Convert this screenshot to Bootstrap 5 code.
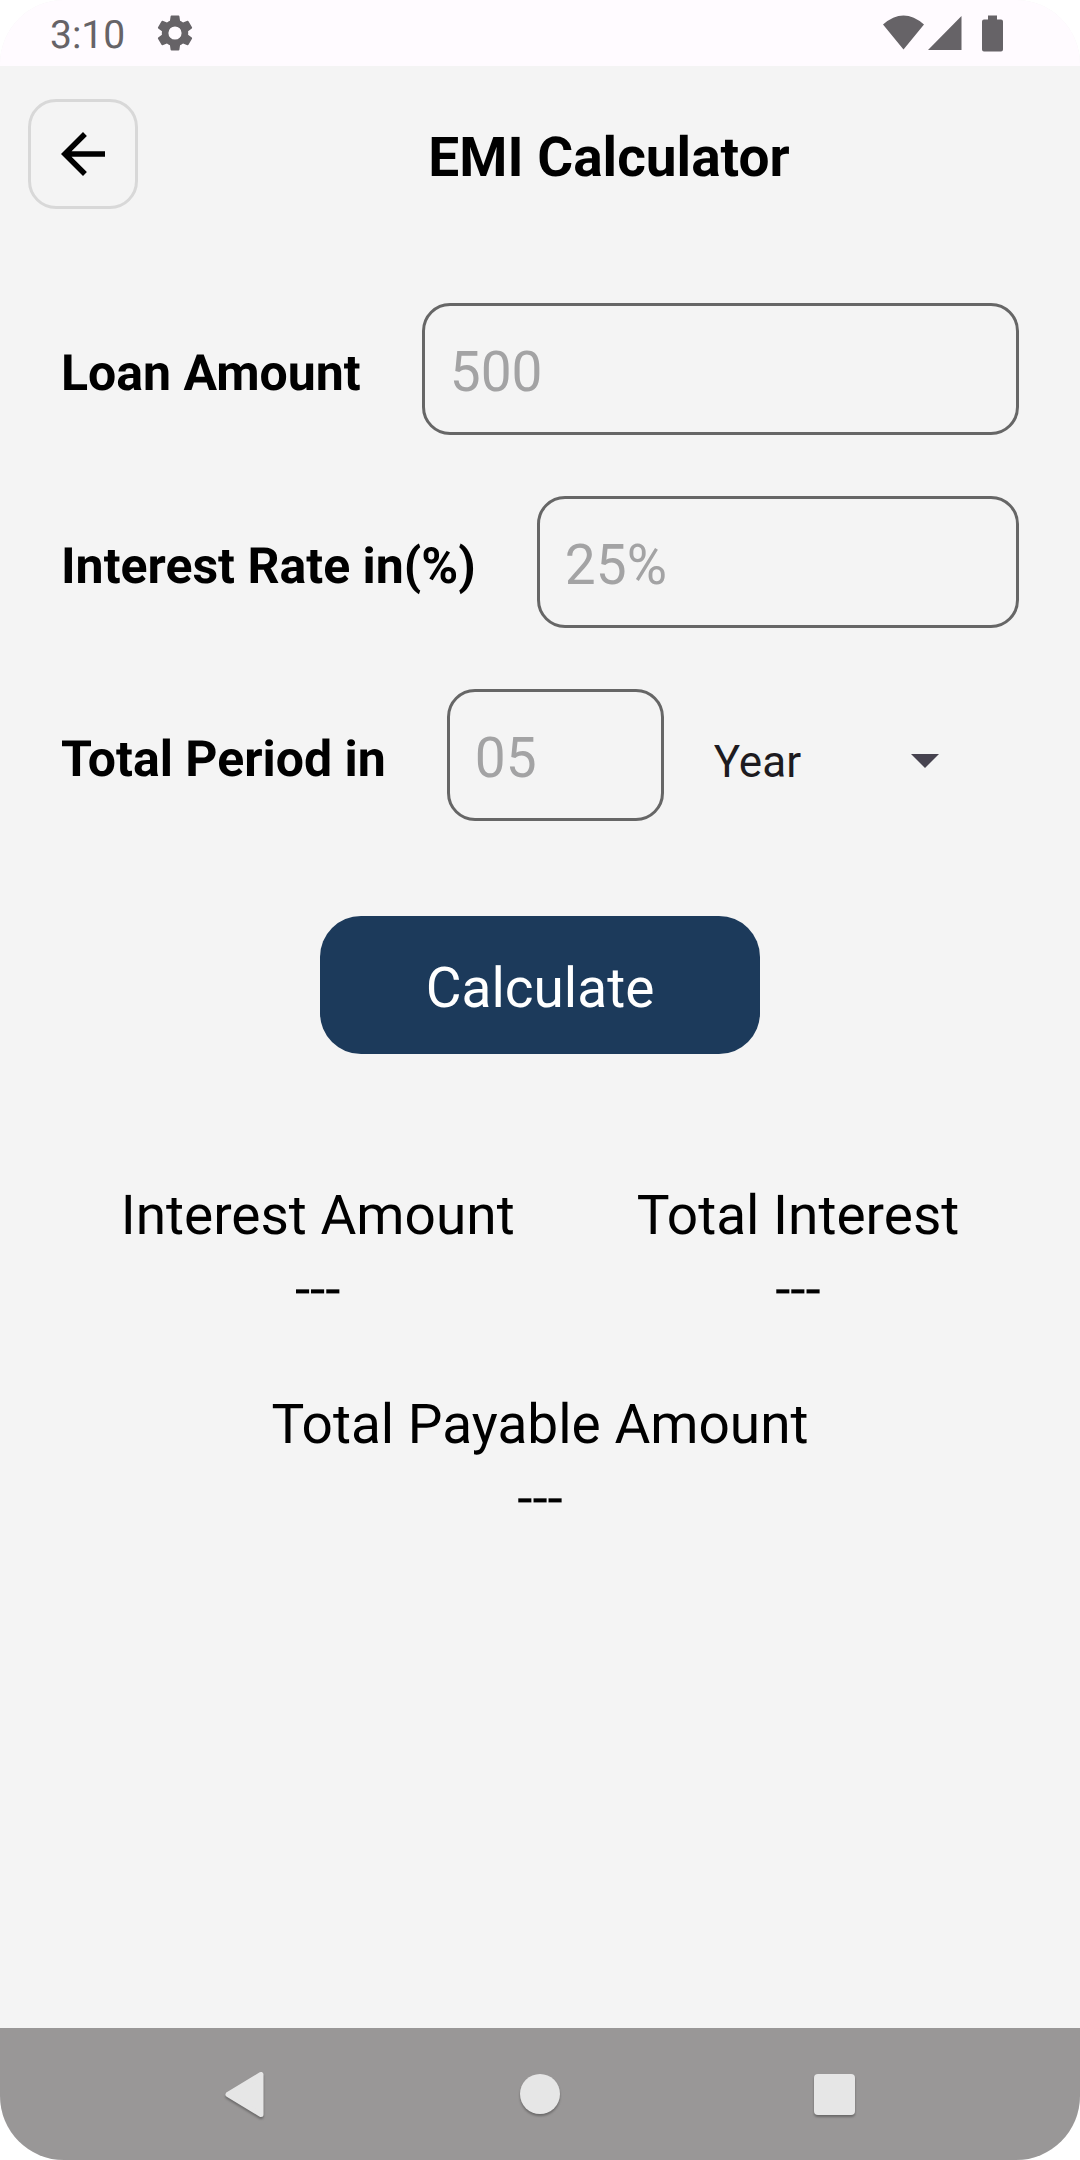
<!DOCTYPE html>
<html lang="en">
<head>
<meta charset="utf-8">
<meta name="viewport" content="width=device-width, initial-scale=1">
<title>EMI Calculator</title>
<link href="https://cdn.jsdelivr.net/npm/bootstrap@5.3.0/dist/css/bootstrap.min.css" rel="stylesheet">
<style>
  body { background: #fff; color: #000; font-family: Roboto, "Liberation Sans", sans-serif; font-size: 55px; line-height: 64px; text-rendering: geometricPrecision; }
  .screen { background: #f4f4f4; border-radius: 64px; }
  .status-bar { background: #fffbff; color: #666367; height: 66px; padding: 0 76px 0 50px; font-size: 39px; line-height: 66px; }
  .clock { padding-top: 3px; }
  .gear { margin-left: 28px; }
  .app-bar { padding: 33px 0 0 28px; }
  .back-btn { width: 110px; height: 110px; border: 3px solid #d8d8d8; border-radius: 28px; }
  .app-title { font-size: 55px; line-height: 64px; padding-top: 8px; }
  .emi-form { padding: 94px 61px 0; gap: 61px; }
  .field-row { gap: 61px; }
  .field-label { font-size: 50px; line-height: 60px; padding-top: 10px; }
  .field-box, .field-box:focus { background: transparent; border: 3px solid #666; border-radius: 28px; height: 132px; padding: 6px 25px 0; font-size: 55px; line-height: 64px; }
  .field-box::placeholder { color: #a3a3a4; }
  .field-short { width: 217px; }
  .unit-select { --bs-form-select-bg-img: url("data:image/svg+xml,%3Csvg xmlns='http://www.w3.org/2000/svg' viewBox='0 0 28 14'%3E%3Cpath fill='%2346434f' d='M0 0h28L14 14z'/%3E%3C/svg%3E");
    background-color: transparent; background-position: right 80px center; background-size: 28px 14px; border: 0; border-radius: 0; color: #1d1b20; font-size: 44px; line-height: 52px; padding: 2px 120px 0 50px; margin-top: 12px; }
  .calc-btn, .calc-btn:hover { background: #1c3a5b; color: #fff; width: 440px; height: 138px; border-radius: 41px; font-size: 55px; line-height: 64px; border: 0; margin-top: 34px; padding: 6px 0 0; }
  .results { padding: 125px 61px 0; gap: 61px; }
  .results-pair { gap: 122px; }
  .results dt, .results dd { font-size: 55px; line-height: 74px; }
  .nav-keys { background: #999797; height: 132px; }
  .nav-keys button { width: 132px; height: 132px; }
  .nav-keys svg { filter: drop-shadow(0 2px 1px rgba(0,0,0,.3)); }
  .keys-inner { gap: 163px; }
</style>
</head>
<body>
<div class="screen d-flex flex-column min-vh-100 overflow-hidden">
  <header class="status-bar d-flex align-items-center justify-content-between">
    <div class="d-flex align-items-center">
      <span class="clock">3:10</span>
      <svg class="gear" width="44" height="44" viewBox="0 0 24 24" fill="currentColor" aria-hidden="true"><path d="M19.14 12.94c.04-.3.06-.61.06-.94s-.02-.64-.07-.94l2.03-1.58a.49.49 0 0 0 .12-.61l-1.92-3.32a.49.49 0 0 0-.59-.22l-2.39.96a7 7 0 0 0-1.62-.94l-.36-2.54a.48.48 0 0 0-.48-.41h-3.84a.47.47 0 0 0-.47.41l-.36 2.54a7.3 7.3 0 0 0-1.62.94l-2.39-.96a.48.48 0 0 0-.59.22L2.74 8.87a.47.47 0 0 0 .12.61l2.03 1.58a6 6 0 0 0-.02 1.88l-2.03 1.58a.49.49 0 0 0-.12.61l1.92 3.32c.12.22.37.29.59.22l2.39-.96c.5.38 1.03.7 1.62.94l.36 2.54c.05.24.24.41.48.41h3.84c.24 0 .44-.17.47-.41l.36-2.54a7 7 0 0 0 1.62-.94l2.39.96c.22.08.47 0 .59-.22l1.92-3.32a.47.47 0 0 0-.12-.61zM12 15.6a3.6 3.6 0 1 1 0-7.2 3.6 3.6 0 0 1 0 7.2z"/></svg>
    </div>
    <svg width="121" height="37" viewBox="0 0 121 37" fill="currentColor" role="img" aria-label="Wi-Fi, signal, battery"><path d="M0 9.500Q20.500-8.500 41 9.500L20.500 34.500zM45 35 78.500 1v34zM105 0.500h9v4h4q2 0 2 2v28q0 2-2 2H101q-2 0-2-2v-28q0-2 2-2h4z"/></svg>
  </header>

  <div class="app-bar d-flex align-items-center">
    <button type="button" class="back-btn btn p-0 d-flex align-items-center justify-content-center" aria-label="Back">
      <svg width="66" height="66" viewBox="0 0 24 24" aria-hidden="true"><path fill="#000" d="M20 11H7.830l5.590-5.590L12 4l-8 8 8 8 1.410-1.410L7.830 13H20z"/></svg>
    </button>
    <h1 class="app-title flex-grow-1 text-center fw-bold mb-0">EMI Calculator</h1>
  </div>

  <main class="flex-grow-1">
    <form class="emi-form d-flex flex-column">
      <div class="field-row d-flex align-items-center">
        <label class="field-label fw-bold flex-shrink-0" for="amount">Loan Amount</label>
        <input class="field-box form-control" id="amount" type="text" inputmode="decimal" placeholder="500">
      </div>
      <div class="field-row d-flex align-items-center">
        <label class="field-label fw-bold flex-shrink-0" for="rate">Interest Rate in(%)</label>
        <input class="field-box form-control" id="rate" type="text" inputmode="decimal" placeholder="25%">
      </div>
      <div class="d-flex align-items-center">
        <div class="field-row d-flex align-items-center flex-shrink-0">
          <label class="field-label fw-bold flex-shrink-0" for="period">Total Period in</label>
          <input class="field-box field-short form-control" id="period" type="text" inputmode="numeric" placeholder="05">
        </div>
        <select class="unit-select form-select" aria-label="Period unit">
          <option>Year</option>
          <option>Month</option>
        </select>
      </div>
      <button type="button" class="calc-btn btn align-self-center">Calculate</button>
    </form>

    <div class="results d-flex flex-column text-center">
      <div class="results-pair d-flex justify-content-center">
        <dl class="mb-0"><dt class="fw-normal">Interest Amount</dt><dd class="mb-0">---</dd></dl>
        <dl class="mb-0"><dt class="fw-normal">Total Interest</dt><dd class="mb-0">---</dd></dl>
      </div>
      <dl class="mb-0"><dt class="fw-normal">Total Payable Amount</dt><dd class="mb-0">---</dd></dl>
    </div>
  </main>

  <nav class="nav-keys" aria-label="System navigation">
    <div class="keys-inner d-flex justify-content-center">
      <button type="button" class="btn border-0 p-0" aria-label="Back"><svg width="48" height="48" viewBox="0 0 48 48"><path d="M7 24.500 40 4.500v40z" fill="#e6e6e6" stroke="#e6e6e6" stroke-width="5" stroke-linejoin="round"/></svg></button>
      <button type="button" class="btn border-0 p-0" aria-label="Home"><svg width="48" height="48" viewBox="0 0 48 48"><circle cx="24" cy="24" r="20" fill="#e6e6e6"/></svg></button>
      <button type="button" class="btn border-0 p-0" aria-label="Recent apps"><svg width="48" height="48" viewBox="0 0 48 48"><rect x="3" y="4" width="41" height="41" rx="4" fill="#e6e6e6"/></svg></button>
    </div>
  </nav>
</div>
<script src="https://cdn.jsdelivr.net/npm/bootstrap@5.3.0/dist/js/bootstrap.bundle.min.js"></script>
</body>
</html>
